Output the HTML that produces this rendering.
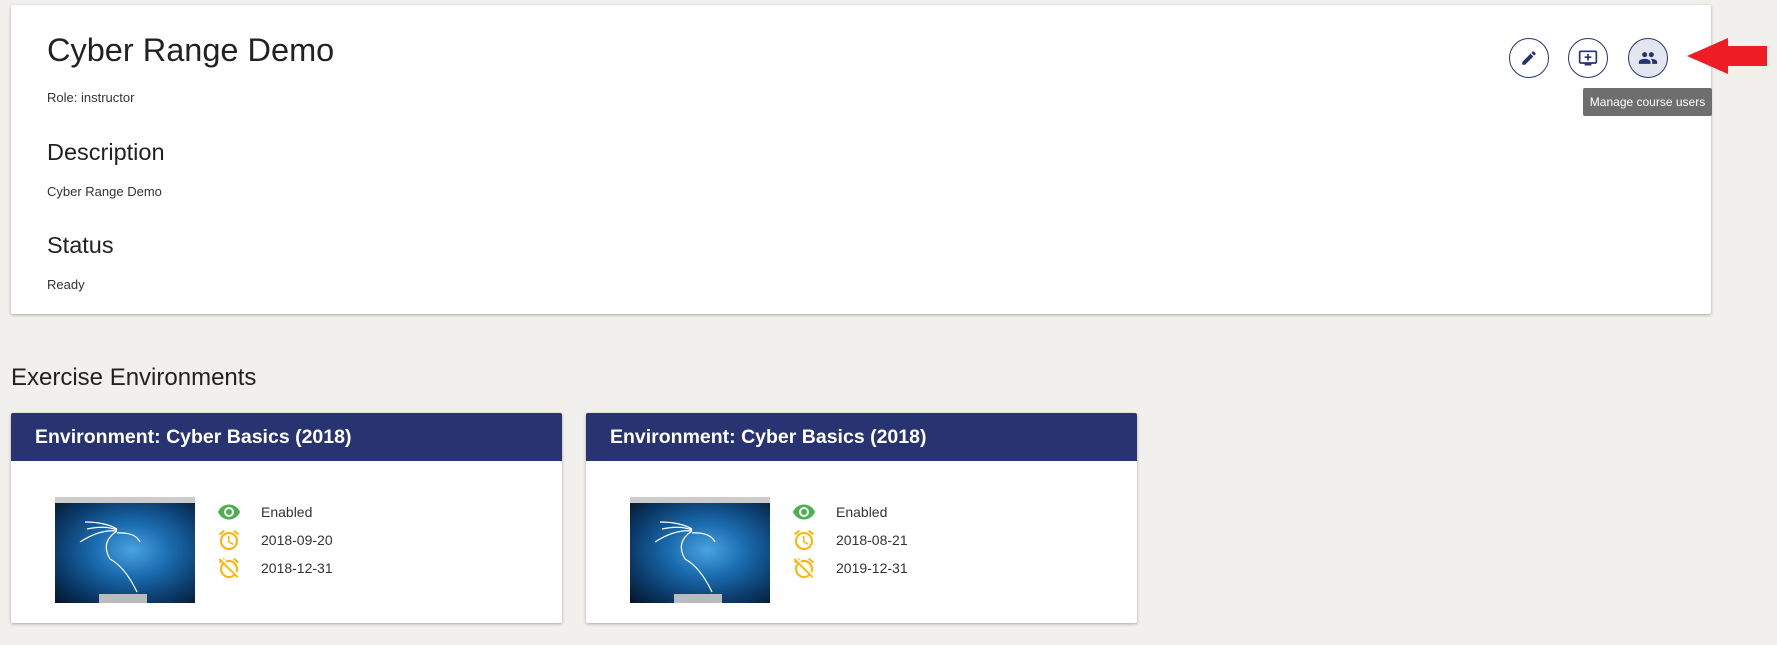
<!DOCTYPE html>
<html><head><meta charset="utf-8"><style>
*{margin:0;padding:0;box-sizing:border-box}
body{width:1777px;height:645px;background:#f1f0ec;font-family:"Liberation Sans",sans-serif;color:#212121;position:relative;overflow:hidden}
.abs{position:absolute;white-space:nowrap}
.card{position:absolute;background:#fff;box-shadow:0 1px 3px rgba(0,0,0,.3);border-radius:2px}
.h2{font-size:23.5px;color:#222}
.sm{font-size:13px;color:#333}
.btn{position:absolute;width:40px;height:40px;border:1px solid #27336f;border-radius:50%;top:38px;display:flex;align-items:center;justify-content:center;background:#fff}
.hdr{position:absolute;left:0;right:0;top:0;height:48px;background:#283371;border-radius:2px 2px 0 0;color:#fff;font-weight:bold;font-size:19.5px;line-height:48px;padding-left:24px}
.thumb{position:absolute;width:140px;height:106px;background:radial-gradient(ellipse at 55% 50%,#4aa3e0 0%,#1a6cb0 35%,#0b3a6a 70%,#051426 100%);overflow:hidden}
.thumb .bar{position:absolute;left:0;right:0;top:0;height:6px;background:#ccc}
.thumb .tb{position:absolute;left:44px;bottom:0;width:48px;height:9px;background:#bbb}
.ic{position:absolute;width:24px;height:24px}
.t{position:absolute;font-size:14px;color:#333}
</style></head><body>
<div class="card" style="left:11px;top:5px;width:1700px;height:309px"></div>
<div class="abs" style="left:47px;top:32px;font-size:32.5px;color:#222">Cyber Range Demo</div>
<div class="abs sm" style="left:47px;top:90px">Role: instructor</div>
<div class="abs h2" style="left:47px;top:139px">Description</div>
<div class="abs sm" style="left:47px;top:184px">Cyber Range Demo</div>
<div class="abs h2" style="left:47px;top:232px">Status</div>
<div class="abs sm" style="left:47px;top:277px">Ready</div>

<div class="btn" style="left:1509px"><svg width="18" height="18" viewBox="0 0 24 24"><path fill="#27336f" d="M3 17.25V21h3.75L17.81 9.94l-3.75-3.75L3 17.25zM20.71 7.04a1 1 0 000-1.41l-2.34-2.34a1 1 0 00-1.41 0l-1.83 1.83 3.75 3.75 1.83-1.83z"/></svg></div>
<div class="btn" style="left:1568px"><svg width="20" height="20" viewBox="0 0 24 24"><path fill="#27336f" d="M21 3H3c-1.1 0-2 .9-2 2v12c0 1.1.9 2 2 2h5v2h8v-2h5c1.1 0 2-.9 2-2V5c0-1.1-.9-2-2-2zm0 14H3V5h18v12zM13 7h-2v3H8v2h3v3h2v-3h3v-2h-3z"/></svg></div>
<div class="btn" style="left:1628px;background:#e3e5ef"><svg width="20" height="20" viewBox="0 0 24 24"><path fill="#27336f" d="M16 11c1.66 0 2.99-1.34 2.99-3S17.66 5 16 5c-1.66 0-3 1.34-3 3s1.34 3 3 3zm-8 0c1.66 0 2.99-1.34 2.99-3S9.66 5 8 5C6.34 5 5 6.34 5 8s1.34 3 3 3zm0 2c-2.33 0-7 1.17-7 3.5V19h14v-2.5c0-2.33-4.67-3.5-7-3.5zm8 0c-.29 0-.62.02-.97.05 1.16.84 1.97 1.97 1.97 3.45V19h6v-2.5c0-2.33-4.67-3.5-7-3.5z"/></svg></div>
<div class="abs" style="left:1583px;top:88px;width:129px;height:28px;background:#6e6e6e;color:#fff;font-size:12px;line-height:28px;text-align:center;border-radius:2px">Manage course users</div>
<svg class="abs" style="left:1685px;top:36px" width="84" height="40" viewBox="0 0 84 40"><polygon fill="#ee1c25" points="2,20 43,2 43,10 82,10 82,30 43,30 43,38"/></svg>

<div class="abs" style="left:11px;top:364px;font-size:24px;color:#222">Exercise Environments</div>

<div class="card" style="left:11px;top:413px;width:551px;height:210px">
<div class="hdr">Environment: Cyber Basics (2018)</div></div>
<div class="card" style="left:586px;top:413px;width:551px;height:210px">
<div class="hdr">Environment: Cyber Basics (2018)</div></div>

<div class="thumb" style="left:55px;top:497px"><div class="bar"></div><div class="tb"></div><svg width="140" height="106" style="position:absolute;left:0;top:0"><path d="M30 25Q50 25 62 32M32 32Q50 28 62 33M25 45Q45 32 62 34M62 34Q45 45 55 62Q70 70 82 95M62 36Q80 35 85 45" stroke="#fff" stroke-width="1.2" fill="none"/></svg></div>
<div class="thumb" style="left:630px;top:497px"><div class="bar"></div><div class="tb"></div><svg width="140" height="106" style="position:absolute;left:0;top:0"><path d="M30 25Q50 25 62 32M32 32Q50 28 62 33M25 45Q45 32 62 34M62 34Q45 45 55 62Q70 70 82 95M62 36Q80 35 85 45" stroke="#fff" stroke-width="1.2" fill="none"/></svg></div>

<svg width="0" height="0" style="position:absolute"><defs>
<symbol id="eye" viewBox="0 0 24 24"><path fill="#4caf50" d="M12 4.5C7 4.5 2.73 7.61 1 12c1.73 4.39 6 7.5 11 7.5s9.27-3.11 11-7.5c-1.73-4.39-6-7.5-11-7.5zM12 17a5 5 0 110-10 5 5 0 010 10zm0-8a3 3 0 100 6 3 3 0 000-6z"/></symbol>
<symbol id="al" viewBox="0 0 24 24"><path fill="#ffb300" d="M22 5.72l-4.6-3.86-1.29 1.53 4.6 3.86L22 5.72zM7.88 3.39L6.6 1.86 2 5.71l1.29 1.53 4.59-3.85zM12.5 8H11v6l4.75 2.85.75-1.23-4-2.37V8zM12 4a9 9 0 100 18 9 9 0 000-18zm0 16a7 7 0 110-14 7 7 0 010 14z"/></symbol>
<symbol id="aloff" viewBox="0 0 24 24"><path fill="#ffb300" d="M12 6c3.87 0 7 3.13 7 7 0 .84-.16 1.65-.43 2.4l1.52 1.52c.58-1.19.91-2.51.91-3.92a9 9 0 00-9-9c-1.41 0-2.73.33-3.92.91L9.6 6.43C10.35 6.16 11.16 6 12 6zm10-.28l-4.6-3.86-1.29 1.53 4.6 3.86L22 5.72zM2.92 2.29L1.65 3.57 2.98 4.9l-1.11.93 1.42 1.42 1.11-.94.8.8A8.96 8.96 0 003 13a9 9 0 009 9c2.25 0 4.31-.83 5.89-2.2l2.2 2.2 1.27-1.27L3.89 3.27l-.97-.98zm13.55 16.1A6.99 6.99 0 0112 20c-3.87 0-7-3.13-7-7 0-1.7.61-3.26 1.61-4.47l9.86 9.86zM8.02 3.28L6.6 1.86l-.86.71 1.42 1.42.86-.71z"/></symbol>
</defs></svg>

<svg class="ic" style="left:217px;top:500px"><use href="#eye"/></svg>
<svg class="ic" style="left:217px;top:528px"><use href="#al"/></svg>
<svg class="ic" style="left:217px;top:556px"><use href="#aloff"/></svg>
<div class="t" style="left:261px;top:504px">Enabled</div>
<div class="t" style="left:261px;top:532px">2018-09-20</div>
<div class="t" style="left:261px;top:560px">2018-12-31</div>

<svg class="ic" style="left:792px;top:500px"><use href="#eye"/></svg>
<svg class="ic" style="left:792px;top:528px"><use href="#al"/></svg>
<svg class="ic" style="left:792px;top:556px"><use href="#aloff"/></svg>
<div class="t" style="left:836px;top:504px">Enabled</div>
<div class="t" style="left:836px;top:532px">2018-08-21</div>
<div class="t" style="left:836px;top:560px">2019-12-31</div>
</body></html>
